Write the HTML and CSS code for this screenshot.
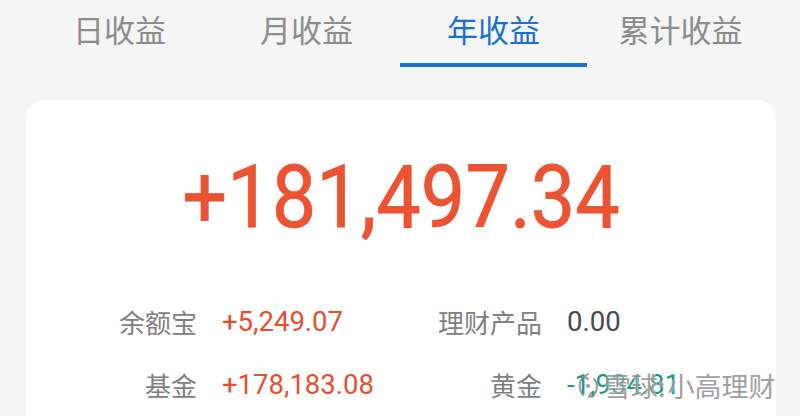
FILE: index.html
```html
<!DOCTYPE html>
<html lang="zh">
<head>
<meta charset="utf-8">
<link rel="stylesheet" href="styles.css">
</head>
<body>
<div class="page">
  <nav class="tabs">
    <div class="tab">日收益</div>
    <div class="tab">月收益</div>
    <div class="tab active">年收益</div>
    <div class="tab">累计收益</div>
  </nav>
  <section class="card">
    <div class="total"><span class="total-num">+181,497.34</span></div>
    <div class="grid">
      <div class="label">余额宝</div>
      <div class="value up">+5,249.07</div>
      <div class="label">理财产品</div>
      <div class="value zero">0.00</div>
      <div class="label">基金</div>
      <div class="value up">+178,183.08</div>
      <div class="label">黄金</div>
      <div class="value down">-1,934.81</div>
    </div>
  </section>
  <div class="watermark">
    <svg class="wm-icon" width="26" height="30" viewBox="0 0 26 30">
      <path d="M8 5 C3 9 2 18 7 24 M12 3 l-4 3 l4 2" fill="none" stroke="#8a8a8a" stroke-width="2" stroke-linecap="round"/>
      <path d="M18 8 C22 12 22 20 17 25 M15 22 l-2 4" fill="none" stroke="#8a8a8a" stroke-width="2" stroke-linecap="round"/>
      <circle cx="12" cy="15" r="2" fill="#8a8a8a"/>
    </svg>
    <span class="wm-text">雪球:</span><span class="wm-text">小高理财</span>
  </div>
</div>
</body>
</html>
```
FILE: styles.css
```css
html, body {
  margin: 0;
  padding: 0;
  background: #f5f5f5;
}
body {
  font-family: "Noto Sans CJK SC", "Noto Sans", sans-serif;
  width: 800px;
  height: 416px;
  overflow: hidden;
}
.page {
  position: relative;
  height: 416px;
  overflow: hidden;
}
.tabs {
  display: flex;
  margin: 0 26px;
}
.tab {
  flex: 1;
  text-align: center;
  font-size: 31px;
  line-height: 40px;
  padding-top: 9px;
  padding-bottom: 14px;
  border-bottom: 4px solid transparent;
  color: #8c8c8c;
}
.tab.active {
  color: #1b6fd2;
  border-bottom-color: #1b6fd2;
}
.card {
  margin: 33px 24px 0 26px;
  background: #ffffff;
  border-radius: 18px 18px 0 0;
  height: 316px;
  padding-top: 47px;
  box-sizing: border-box;
}
.total {
  text-align: center;
  font-family: "Roboto", sans-serif;
  font-size: 88px;
  line-height: 100px;
  color: #ec5333;
}
.total-num {
  display: inline-block;
  transform: scaleX(0.9);
  transform-origin: center;
  -webkit-text-stroke: 0.8px #ec5333;
}
.grid {
  margin-top: 43px;
  display: grid;
  grid-template-columns: 171px 146px 149px 1fr;
  column-gap: 25px;
  grid-auto-rows: 63px;
  align-items: center;
}
.label {
  text-align: right;
  font-size: 26px;
  color: #808080;
  line-height: 63px;
}
.value {
  font-family: "Roboto", "Noto Sans", sans-serif;
  font-size: 27.5px;
  line-height: 63px;
  white-space: nowrap;
}
.value.up { color: #e4502f; }
.value.zero { color: #4a4a4a; }
.value.down { color: #17998a; }
.watermark {
  position: absolute;
  left: 576px;
  top: 367px;
  display: flex;
  align-items: center;
  gap: 2px;
  opacity: 0.85;
}
.wm-text {
  font-size: 27px;
  line-height: 38px;
  color: #8f8f8f;
  text-shadow: 0 0 2px #ffffff, 0 0 1px #ffffff;
}
```
